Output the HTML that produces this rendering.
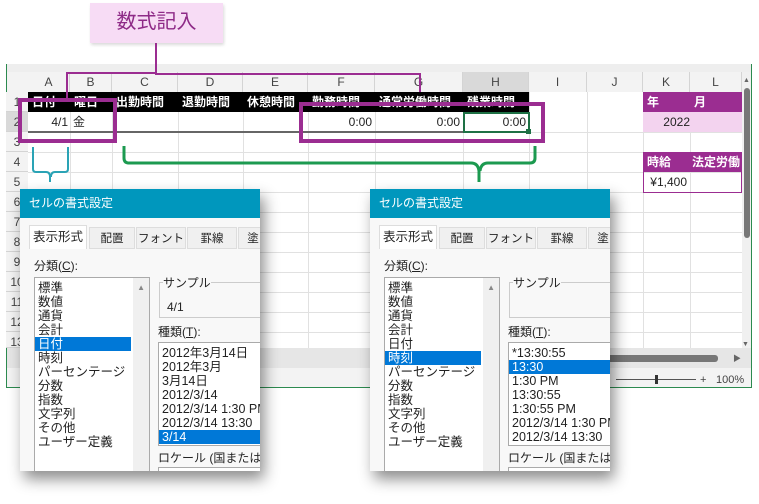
<!DOCTYPE html>
<html><head><meta charset="utf-8">
<style>
*{margin:0;padding:0;box-sizing:border-box}
body{width:759px;height:504px;background:#fff;position:relative;overflow:hidden;font-family:"Liberation Sans","Noto Sans CJK JP",sans-serif;}
.a{position:absolute}
.t{position:absolute;white-space:nowrap;font-size:12px;color:#222;line-height:14px}
.vl{position:absolute;width:1px;background:#e1e1e1}
.hl{position:absolute;height:1px;background:#e1e1e1}
.ch{position:absolute;top:72px;height:20px;font-size:12px;color:#444;text-align:center;line-height:20px;border-right:1px solid #d4d4d4;background:#f3f3f3}
.rn{position:absolute;left:6px;width:22px;height:20px;font-size:12px;color:#444;text-align:center;line-height:20px;background:#f3f3f3;border-bottom:1px solid #d4d4d4}
.hd{position:absolute;top:92px;height:20px;color:#fff;font-size:12px;font-weight:bold;line-height:20px;padding-left:4px}
.dlg{position:absolute;top:189px;width:240px;height:282px;background:#f8f8f8;box-shadow:4px 8px 14px rgba(0,0,0,.45);overflow:hidden}
.dlg .title{position:absolute;left:0;top:0;width:100%;height:29px;background:#0097bd;color:#fff;font-size:12px;line-height:29px;padding-left:9px}
.tab{position:absolute;top:38px;height:22px;font-size:11.5px;line-height:22px;text-align:center;border:1px solid #ddd;background:#f0f0f0;color:#222}
.list{position:absolute;background:#fff;border:1px solid #aaa}
.it{position:absolute;left:0;height:14px;font-size:12.5px;line-height:14px;padding-left:3px;white-space:nowrap;color:#222;width:100%}
.sel{background:#0078d7;color:#fff}
</style></head><body>
<div class="a" style="left:90px;top:3px;width:133px;height:40px;background:#f7dcf5;box-shadow:1px 2px 3px rgba(0,0,0,.15)"></div>
<div class="t" style="left:90px;top:10px;width:133px;text-align:center;font-size:20px;line-height:24px;color:#8e2a87">数式記入</div>

<div class="a" style="left:6px;top:64px;width:746px;height:324px;border:1px solid #2c8a4f;border-top:none;background:#fff"></div>
<div class="a" style="left:7px;top:64px;width:744px;height:8px;background:#eeeeee"></div>
<div class="a" style="left:7px;top:72px;width:21px;height:20px;background:#f3f3f3"></div>
<div class="ch" style="left:28px;width:42px">A</div>
<div class="ch" style="left:70px;width:42px">B</div>
<div class="ch" style="left:112px;width:66px">C</div>
<div class="ch" style="left:178px;width:65px">D</div>
<div class="ch" style="left:243px;width:65px">E</div>
<div class="ch" style="left:308px;width:67px">F</div>
<div class="ch" style="left:375px;width:88px">G</div>
<div class="ch" style="left:463px;width:66px;background:#d9d9d9">H</div>
<div class="ch" style="left:529px;width:58px">I</div>
<div class="ch" style="left:587px;width:56px">J</div>
<div class="ch" style="left:643px;width:47px">K</div>
<div class="ch" style="left:690px;width:52px">L</div>
<div class="rn" style="top:92px">1</div><div class="rn" style="top:112px;background:#d9d9d9">2</div>
<div class="rn" style="top:132px">3</div><div class="rn" style="top:152px">4</div>
<div class="rn" style="top:172px">5</div><div class="rn" style="top:192px">6</div>
<div class="rn" style="top:212px">7</div><div class="rn" style="top:232px">8</div>
<div class="rn" style="top:252px">9</div><div class="rn" style="top:272px">10</div>
<div class="rn" style="top:292px">11</div><div class="rn" style="top:312px">12</div>
<div class="rn" style="top:332px;height:16px">13</div>
<div class="vl" style="left:70px;top:92px;height:256px"></div>
<div class="vl" style="left:112px;top:92px;height:256px"></div>
<div class="vl" style="left:178px;top:92px;height:256px"></div>
<div class="vl" style="left:243px;top:92px;height:256px"></div>
<div class="vl" style="left:308px;top:92px;height:256px"></div>
<div class="vl" style="left:375px;top:92px;height:256px"></div>
<div class="vl" style="left:463px;top:92px;height:256px"></div>
<div class="vl" style="left:529px;top:92px;height:256px"></div>
<div class="vl" style="left:587px;top:92px;height:256px"></div>
<div class="vl" style="left:643px;top:92px;height:256px"></div>
<div class="vl" style="left:690px;top:92px;height:256px"></div>
<div class="hl" style="left:28px;top:132px;width:714px"></div>
<div class="hl" style="left:28px;top:152px;width:714px"></div>
<div class="hl" style="left:28px;top:172px;width:714px"></div>
<div class="hl" style="left:28px;top:192px;width:714px"></div>
<div class="hl" style="left:28px;top:212px;width:714px"></div>
<div class="hl" style="left:28px;top:232px;width:714px"></div>
<div class="hl" style="left:28px;top:252px;width:714px"></div>
<div class="hl" style="left:28px;top:272px;width:714px"></div>
<div class="hl" style="left:28px;top:292px;width:714px"></div>
<div class="hl" style="left:28px;top:312px;width:714px"></div>
<div class="hl" style="left:28px;top:332px;width:714px"></div>
<div class="a" style="left:28px;top:92px;width:501px;height:20px;background:#000"></div>
<div class="hd" style="left:28px">日付</div><div class="hd" style="left:70px">曜日</div>
<div class="hd" style="left:112px">出勤時間</div><div class="hd" style="left:178px">退勤時間</div>
<div class="hd" style="left:243px">休憩時間</div><div class="hd" style="left:308px">勤務時間</div>
<div class="hd" style="left:375px">通常労働時間</div><div class="hd" style="left:463px">残業時間</div>
<div class="a" style="left:28px;top:131px;width:501px;height:2px;background:#666"></div>
<div class="t" style="left:28px;top:115px;width:40px;text-align:right">4/1</div>
<div class="t" style="left:73px;top:115px">金</div>
<div class="t" style="left:308px;top:115px;width:64px;text-align:right">0:00</div>
<div class="t" style="left:375px;top:115px;width:85px;text-align:right">0:00</div>
<div class="a" style="left:463px;top:112px;width:67px;height:21px;border:2px solid #1e7145"></div>
<div class="t" style="left:463px;top:115px;width:63px;text-align:right">0:00</div>
<div class="a" style="left:526px;top:129px;width:5px;height:5px;background:#1e7145"></div>
<div class="hd" style="left:643px;width:99px;background:#9b2d91">年</div>
<div class="hd" style="left:690px;background:none">月</div>
<div class="a" style="left:643px;top:112px;width:99px;height:20px;background:#f3d3ef"></div>
<div class="t" style="left:643px;top:115px;width:47px;text-align:right">2022</div>
<div class="a" style="left:643px;top:152px;width:99px;height:20px;background:#9b2d91"></div>
<div class="t" style="left:647px;top:155px;color:#fff;font-weight:bold">時給</div>
<div class="t" style="left:692px;top:155px;color:#fff;font-weight:bold">法定労働</div>
<div class="a" style="left:643px;top:172px;width:99px;height:21px;border:1px solid #9b2d91;border-top:none"></div>
<div class="t" style="left:643px;top:175px;width:44px;text-align:right">¥1,400</div>
<div class="a" style="left:742px;top:72px;width:9px;height:276px;background:#f0f0f0"></div>
<div class="a" style="left:744px;top:88px;width:6px;height:150px;background:#777;border-radius:3px"></div>
<div class="t" style="left:743px;top:74px;font-size:7px;color:#666">▲</div>
<div class="t" style="left:742px;top:338px;font-size:7px;color:#666">▼</div>
<div class="a" style="left:7px;top:348px;width:744px;height:20px;background:#e6e6e6"></div>
<div class="a" style="left:600px;top:355px;width:118px;height:7px;background:#777;border-radius:3px"></div>
<div class="t" style="left:733px;top:352px;font-size:8px;color:#666">▶</div>
<div class="a" style="left:7px;top:368px;width:744px;height:19px;background:#f3f3f3"></div>
<div class="a" style="left:616px;top:379px;width:80px;height:1px;background:#555"></div>
<div class="a" style="left:655px;top:375px;width:3px;height:9px;background:#333"></div>
<div class="t" style="left:700px;top:373px;font-size:11px;color:#444">+</div>
<div class="t" style="left:716px;top:373px;font-size:11px;color:#444">100%</div>

<svg class="a" style="left:0;top:0" width="759" height="504">
<g fill="none" stroke="#9b2d91">
<polyline points="156,43 156,74 420,74 420,92" stroke-width="2"/>
<polyline points="156,73 67,73 67,100" stroke-width="2"/>
<rect x="20" y="100" width="95" height="41" stroke-width="4"/>
<rect x="301" y="104" width="242" height="37" stroke-width="4"/>
</g>
<path d="M33,147 v22 q0,3 3,3 h10 q4,0 4,5 v5 M68,147 v22 q0,3 -3,3 h-10 q-4,0 -4,5" fill="none" stroke="#2aa3b5" stroke-width="2"/>
<path d="M124,146 v12 q0,5 5,5 h342 q7,0 8,8 v11 M535,146 v12 q0,5 -5,5 h-42 q-7,0 -8,8" fill="none" stroke="#1c9a50" stroke-width="3"/>
</svg>

<div class="dlg" style="left:20px">
 <div class="title">セルの書式設定</div>
 <div class="tab" style="left:9px;width:58px;background:#fff;border-bottom:none;height:24px;top:36px;font-size:12.5px">表示形式</div>
 <div class="tab" style="left:69px;width:46px">配置</div>
 <div class="tab" style="left:116px;width:50px">フォント</div>
 <div class="tab" style="left:167px;width:50px">罫線</div>
 <div class="tab" style="left:218px;width:30px">塗</div>
 <div class="t" style="left:14px;top:70px">分類(<u>C</u>):</div>
 <div class="list" style="left:14px;top:88px;width:116px;height:200px">
  <div class="it" style="top:3px">標準</div><div class="it" style="top:17px">数値</div>
  <div class="it" style="top:31px">通貨</div><div class="it" style="top:45px">会計</div>
  <div class="it sel" style="top:59px;width:96px">日付</div><div class="it" style="top:73px">時刻</div>
  <div class="it" style="top:87px">パーセンテージ</div><div class="it" style="top:101px">分数</div>
  <div class="it" style="top:115px">指数</div><div class="it" style="top:129px">文字列</div>
  <div class="it" style="top:143px">その他</div><div class="it" style="top:157px">ユーザー定義</div>
  <div class="a" style="right:0;top:0;width:16px;height:200px;background:#f0f0f0"></div>
  <div class="t" style="right:4px;top:3px;font-size:8px;color:#888">▲</div>
 </div>
 <div class="a" style="left:139px;top:93px;width:110px;height:36px;border:1px solid #ccc"></div>
 <div class="t" style="left:143px;top:87px;background:#f8f8f8">サンプル</div>
 <div class="t" style="left:147px;top:111px">4/1</div>
 <div class="t" style="left:138px;top:136px">種類(<u>T</u>):</div>
 <div class="list" style="left:138px;top:153px;width:110px;height:104px">
  <div class="it" style="top:3px">2012年3月14日</div><div class="it" style="top:17px">2012年3月</div>
  <div class="it" style="top:31px">3月14日</div><div class="it" style="top:45px">2012/3/14</div>
  <div class="it" style="top:59px">2012/3/14 1:30 PM</div><div class="it" style="top:73px">2012/3/14 13:30</div>
  <div class="it sel" style="top:87px">3/14</div>
 </div>
 <div class="t" style="left:138px;top:262px">ロケール (国または地域</div>
 <div class="a" style="left:138px;top:278px;width:110px;height:10px;border:1px solid #aaa;background:#fff"></div>
</div>

<div class="dlg" style="left:370px">
 <div class="title">セルの書式設定</div>
 <div class="tab" style="left:9px;width:58px;background:#fff;border-bottom:none;height:24px;top:36px;font-size:12.5px">表示形式</div>
 <div class="tab" style="left:69px;width:46px">配置</div>
 <div class="tab" style="left:116px;width:50px">フォント</div>
 <div class="tab" style="left:167px;width:50px">罫線</div>
 <div class="tab" style="left:218px;width:30px">塗</div>
 <div class="t" style="left:14px;top:70px">分類(<u>C</u>):</div>
 <div class="list" style="left:14px;top:88px;width:116px;height:200px">
  <div class="it" style="top:3px">標準</div><div class="it" style="top:17px">数値</div>
  <div class="it" style="top:31px">通貨</div><div class="it" style="top:45px">会計</div>
  <div class="it" style="top:59px">日付</div><div class="it sel" style="top:73px;width:96px">時刻</div>
  <div class="it" style="top:87px">パーセンテージ</div><div class="it" style="top:101px">分数</div>
  <div class="it" style="top:115px">指数</div><div class="it" style="top:129px">文字列</div>
  <div class="it" style="top:143px">その他</div><div class="it" style="top:157px">ユーザー定義</div>
  <div class="a" style="right:0;top:0;width:16px;height:200px;background:#f0f0f0"></div>
  <div class="t" style="right:4px;top:3px;font-size:8px;color:#888">▲</div>
 </div>
 <div class="a" style="left:139px;top:93px;width:110px;height:36px;border:1px solid #ccc"></div>
 <div class="t" style="left:143px;top:87px;background:#f8f8f8">サンプル</div>
 <div class="t" style="left:138px;top:136px">種類(<u>T</u>):</div>
 <div class="list" style="left:138px;top:153px;width:110px;height:104px">
  <div class="it" style="top:3px">*13:30:55</div><div class="it sel" style="top:17px">13:30</div>
  <div class="it" style="top:31px">1:30 PM</div><div class="it" style="top:45px">13:30:55</div>
  <div class="it" style="top:59px">1:30:55 PM</div><div class="it" style="top:73px">2012/3/14 1:30 PM</div>
  <div class="it" style="top:87px">2012/3/14 13:30</div>
 </div>
 <div class="t" style="left:138px;top:262px">ロケール (国または地域</div>
 <div class="a" style="left:138px;top:278px;width:110px;height:10px;border:1px solid #aaa;background:#fff"></div>
</div>
</body></html>
